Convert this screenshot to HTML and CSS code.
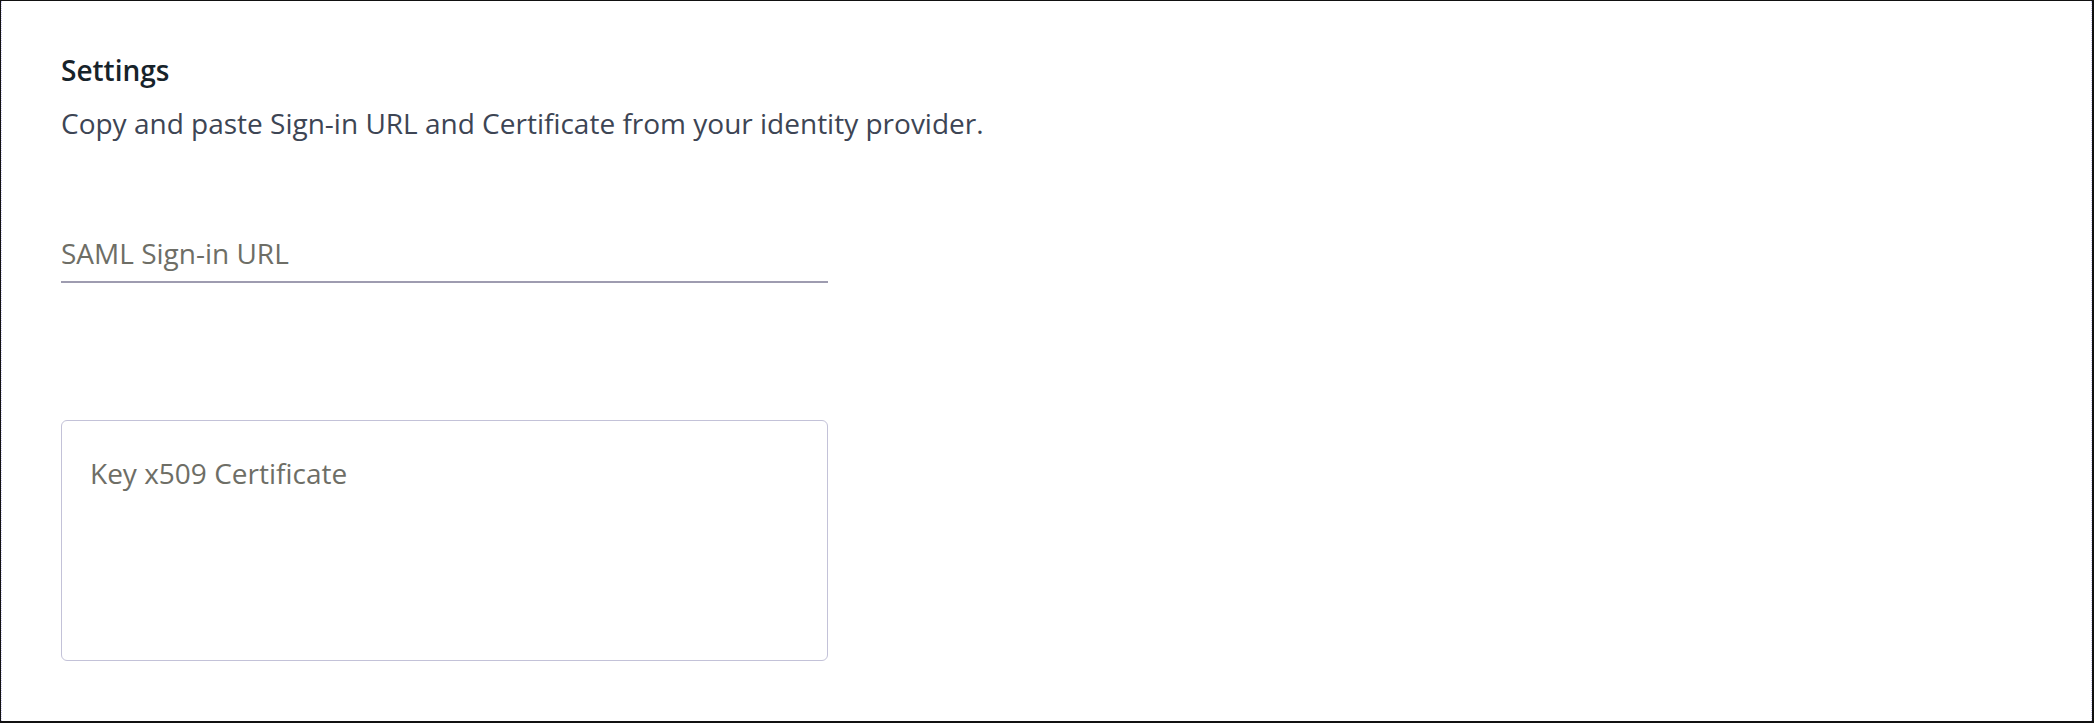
FILE: index.html
```html
<!DOCTYPE html>
<html lang="en">
<head>
<meta charset="utf-8">
<title>Settings</title>
<link rel="stylesheet" href="styles.css">
</head>
<body>
<div class="frame">
  <div class="panel">
    <h2 class="title">Settings</h2>
    <p class="desc">Copy and paste Sign-in URL and Certificate from your identity provider.</p>
    <input class="url-input" type="text" placeholder="SAML Sign-in URL">
    <textarea class="cert-input" placeholder="Key x509 Certificate"></textarea>
  </div>
</div>
</body>
</html>
```
FILE: styles.css
```css
html, body {
  margin: 0;
  padding: 0;
  background: #ffffff;
}
.frame {
  box-sizing: border-box;
  width: 100vw;
  height: 100vh;
  border-top: 1px solid #111111;
  border-left: 1px solid #111111;
  border-right: 2px solid #111111;
  border-bottom: 2px solid #111111;
  overflow: hidden;
}
.panel {
  box-sizing: border-box;
  height: 100%;
  border-left: 1px dotted #c9c7ec;
  border-right: 1px dotted #c9c7ec;
  padding: 51px 0 0 59px;
  display: flex;
  flex-direction: column;
  align-items: flex-start;
  font-family: "Open Sans", "Noto Sans", sans-serif;
}
.title {
  margin: 0;
  font-size: 28px;
  line-height: 36px;
  font-weight: 600;
  color: #17232a;
}
.desc {
  margin: 17px 0 0 0;
  font-size: 28px;
  line-height: 36px;
  font-weight: 400;
  color: #3d4554;
}
.url-input {
  box-sizing: border-box;
  margin: 94px 0 0 0;
  width: 767px;
  padding: 0 0 10px 0;
  border: none;
  border-bottom: 2px solid #9e9cb0;
  outline: none;
  font-family: inherit;
  font-size: 28px;
  line-height: 36px;
  height: 48px;
  color: #333;
  background: transparent;
}
.url-input::placeholder,
.cert-input::placeholder {
  color: #6e6e66;
  opacity: 1;
}
.cert-input {
  box-sizing: border-box;
  margin: 137px 0 0 0;
  width: 767px;
  height: 241px;
  padding: 34px 28px 32px 28px;
  border: 1px solid #c3c2d8;
  border-radius: 6px;
  resize: none;
  outline: none;
  font-family: inherit;
  font-size: 28px;
  line-height: 36px;
  color: #333;
  background: #fff;
}
```
